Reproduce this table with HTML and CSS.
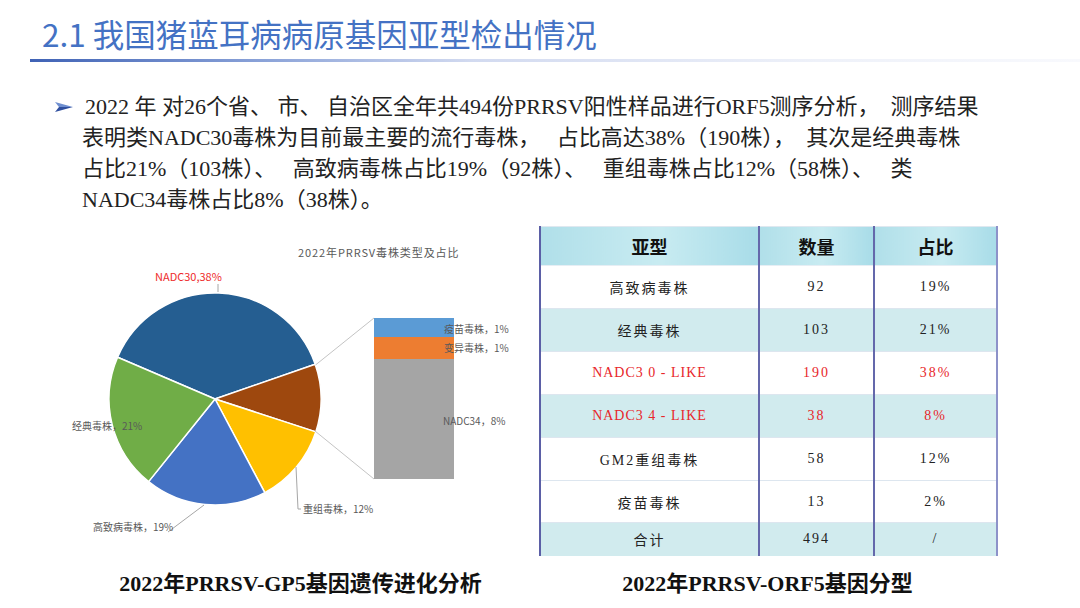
FILE: index.html
```html
<!DOCTYPE html>
<html lang="zh-CN">
<head>
<meta charset="utf-8">
<title>2.1 我国猪蓝耳病病原基因亚型检出情况</title>
<link rel="stylesheet" href="styles.css">
</head>
<body>
<div class="slide">
  <header class="head">
    <h1 class="title">2.1 我国猪蓝耳病病原基因亚型检出情况</h1>
    <div class="rule"></div>
  </header>

  <div class="intro">
    <div class="line"><span class="bullet"><svg width="18" height="10" viewBox="0 0 18 10"><polygon points="0,0 18,5 4,5" fill="#6f8fd0"/><polygon points="0,10 18,5 4,5" fill="#2f4f9f"/></svg></span>2022 年 对26个省、 市、 自治区全年共494份PRRSV阳性样品进行ORF5测序分析，  测序结果</div>
    <div class="line">表明类NADC30毒株为目前最主要的流行毒株，   占比高达38%（190株），  其次是经典毒株</div>
    <div class="line">占比21%（103株）、   高致病毒株占比19%（92株）、   重组毒株占比12%（58株）、   类</div>
    <div class="line">NADC34毒株占比8%（38株）。</div>
  </div>

  <div class="bottom">
    <svg class="chart" width="539" height="330" viewBox="0 227 539 330">
      <text class="ctitle" x="298" y="258">2022年PRRSV毒株类型及占比</text>
      <g class="pie">
        <path d="M215,400 L117.6,358.2 A106,106 0 0 1 315.2,365.3 Z" fill="#255e91"/>
        <path d="M215,400 L315.2,365.3 A106,106 0 0 1 315.8,432.9 Z" fill="#9e480e"/>
        <path d="M215,400 L315.8,432.9 A106,106 0 0 1 264.8,493.6 Z" fill="#ffc000"/>
        <path d="M215,400 L264.8,493.6 A106,106 0 0 1 148.6,482.6 Z" fill="#4472c4"/>
        <path d="M215,400 L148.6,482.6 A106,106 0 0 1 117.6,358.2 Z" fill="#70ad47"/>
      </g>
      <g class="links">
        <line x1="315.5" y1="366" x2="374" y2="319"/>
        <line x1="315" y1="432" x2="374" y2="480"/>
      </g>
      <rect x="374" y="319" width="80" height="19" fill="#5b9bd5"/>
      <rect x="374" y="338" width="80" height="22" fill="#ed7d31"/>
      <rect x="374" y="360" width="80" height="120" fill="#a5a5a5"/>
      <g class="leaders">
        <line x1="218" y1="285" x2="218" y2="293"/>
        <line x1="168" y1="533" x2="204" y2="506"/>
        <polyline points="296,468 298,510 301,510"/>
      </g>
      <text class="lbl red" x="155" y="282">NADC30,38%</text>
      <text class="lbl" x="72" y="431">经典毒株，21%</text>
      <text class="lbl" x="93" y="532">高致病毒株，19%</text>
      <text class="lbl" x="303" y="514">重组毒株，12%</text>
      <text class="lbl" x="444" y="334">疫苗毒株，1%</text>
      <text class="lbl" x="444" y="353">变异毒株，1%</text>
      <text class="lbl" x="443" y="426">NADC34，8%</text>
    </svg>

    <table class="grid">
      <colgroup><col class="c1"><col class="c2"><col class="c3"></colgroup>
      <thead>
        <tr><th>亚型</th><th>数量</th><th>占比</th></tr>
      </thead>
      <tbody>
        <tr><td>高致病毒株</td><td>92</td><td>19%</td></tr>
        <tr class="tint"><td>经典毒株</td><td>103</td><td>21%</td></tr>
        <tr class="red"><td class="lat">NADC3 0 - LIKE</td><td>190</td><td>38%</td></tr>
        <tr class="tint red"><td class="lat">NADC3 4 - LIKE</td><td>38</td><td>8%</td></tr>
        <tr><td>GM2重组毒株</td><td>58</td><td>12%</td></tr>
        <tr class="short"><td>疫苗毒株</td><td>13</td><td>2%</td></tr>
        <tr class="tint total"><td>合计</td><td>494</td><td>/</td></tr>
      </tbody>
    </table>

    <div class="cap cap-left">2022年PRRSV-GP5基因遗传进化分析</div>
    <div class="cap cap-right">2022年PRRSV-ORF5基因分型</div>
  </div>
</div>
</body>
</html>
```
FILE: styles.css
```css
* { box-sizing: border-box; }

body {
  margin: 0;
  background: #ffffff;
}

.slide {
  width: 1080px;
  height: 608px;
  overflow: hidden;
  background: #ffffff;
  font-family: "Liberation Serif", "Noto Sans CJK SC", serif;
  color: #222222;
}

.head {
  padding-top: 13px;
}

.title {
  margin: 0 0 0 42px;
  font-family: "Noto Sans CJK SC", "Noto Sans", sans-serif;
  font-weight: 400;
  font-size: 31.5px;
  line-height: 40px;
  color: #4472c4;
}

.rule {
  margin: 6px 0 0 30px;
  height: 3px;
  background: linear-gradient(to right, #3f62b5 0%, #8aa2d8 22%, #d2daf0 42%, #eef1f9 75%, #f8f9fd 100%);
}

.intro {
  margin-top: 29px;
  padding-left: 82px;
  font-size: 22px;
  line-height: 31px;
  color: #222222;
}

.line {
  white-space: pre;
}

.bullet {
  display: inline-block;
  width: 30px;
  margin-left: -27px;
}

.bullet svg {
  display: inline-block;
  vertical-align: 2px;
}

.bottom {
  margin-top: 11px;
  display: grid;
  grid-template-columns: 539px 457px;
  grid-template-rows: 330px 30px;
  row-gap: 13px;
}

.chart {
  display: block;
}

.ctitle {
  font-family: "Noto Sans CJK SC", "Noto Sans", sans-serif;
  font-size: 11px;
  letter-spacing: 0.9px;
  fill: #595959;
}

.pie path {
  stroke: #ffffff;
  stroke-width: 1.5;
  stroke-linejoin: round;
}

.links line {
  stroke: #c4c4c4;
  stroke-width: 1;
}

.leaders line,
.leaders polyline {
  stroke: #a6a6a6;
  stroke-width: 1;
  fill: none;
}

.lbl {
  font-family: "Noto Sans CJK SC", "Noto Sans", sans-serif;
  font-size: 10px;
  fill: #595959;
}

.lbl.red {
  font-size: 11px;
  fill: #ee2b2b;
}

.grid {
  align-self: start;
  width: 457px;
  table-layout: fixed;
  border-collapse: collapse;
  border-top: 1px solid #dfe8f0;
  border-left: 2px solid #5b5fa6;
  border-right: 2px solid #8d92c9;
}

.c1 { width: 219px; }
.c2 { width: 115px; }
.c3 { width: 123px; }

.grid th {
  height: 39px;
  padding: 0;
  font-family: "Noto Sans CJK SC", "Noto Sans", sans-serif;
  font-weight: 700;
  font-size: 18px;
  color: #111111;
  background: linear-gradient(to right, #b0dfe9 0%, #c8ebf1 55%, #a8dce8 100%);
  border-left: 2px solid #6468ab;
  border-bottom: 1px solid #e6eef4;
}

.grid th:first-child,
.grid td:first-child {
  border-left: none;
}

.grid td {
  height: 43px;
  padding: 0;
  text-align: center;
  font-size: 14px;
  letter-spacing: 2px;
  color: #222222;
  border-left: 2px solid #6468ab;
  border-bottom: 1.5px solid #dde6ef;
}

.grid td.lat {
  letter-spacing: 1px;
}

.grid tr.tint td {
  background: #d1ebee;
}

.grid tr.red td {
  color: #e8262a;
}

.grid tr.short td {
  height: 42px;
}

.grid tr.total td {
  height: 33px;
  border-bottom: none;
}

.cap {
  font-family: "Liberation Serif", "Noto Sans CJK SC", serif;
  font-weight: 700;
  font-size: 22px;
  line-height: 30px;
  color: #111111;
  text-align: center;
  white-space: nowrap;
}

.cap-left {
  padding-left: 62px;
}
```
